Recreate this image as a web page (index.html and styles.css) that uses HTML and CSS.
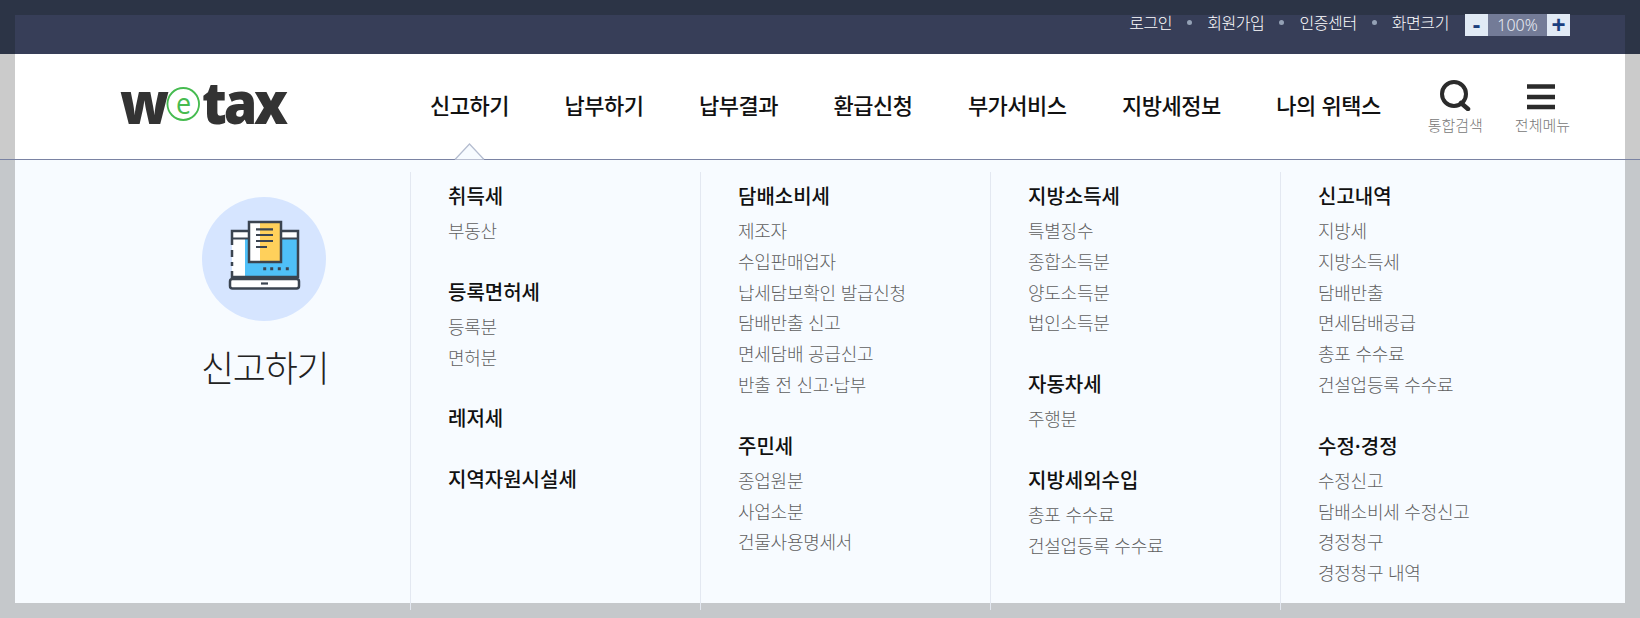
FILE: index.html
```html
<!DOCTYPE html>
<html lang="ko">

<head>
    <meta charset="UTF-8">
    <title>wetax</title>
    <link rel="stylesheet" href="styles.css">
</head>

<body>
    <!-- 상단 유틸 -->
    <div class="top">
        <a href="#" class="top-link">로그인</a>
        <i class="dot"></i>
        <a href="#" class="top-link">회원가입</a>
        <i class="dot"></i>
        <a href="#" class="top-link">인증센터</a>
        <i class="dot"></i>
        <span class="top-link">화면크기</span>
        <div class="zoom">
            <a href="#" class="zoom-btn">-</a>
            <span class="zoom-val">100%</span>
            <a href="#" class="zoom-btn">+</a>
        </div>
    </div>

    <!-- 헤더 -->
    <div class="head-wrap">
        <div class="head">
            <div class="logo-box">
                <a href="#" class="logo">w<span class="logo-e">e</span>tax</a>
            </div>
            <ul class="gnb">
                <li class="on">
                    <a href="#">신고하기</a>
                    <svg class="arrow" width="31" height="17" viewBox="0 0 31 17">
                        <path d="M1 16.5 L15.5 1 L30 16.5" fill="#f7fbff" stroke="#b4bccf" stroke-width="1.2"/>
                    </svg>
                </li>
                <li><a href="#">납부하기</a></li>
                <li><a href="#">납부결과</a></li>
                <li><a href="#">환급신청</a></li>
                <li><a href="#">부가서비스</a></li>
                <li><a href="#">지방세정보</a></li>
                <li><a href="#">나의 위택스</a></li>
            </ul>
            <a href="#" class="tool tool-search">
                <svg width="32" height="31" viewBox="0 0 32 31">
                    <circle cx="15" cy="14" r="12" fill="none" stroke="#2b2b2b" stroke-width="4"/>
                    <path d="M22 23 L29 29" stroke="#2b2b2b" stroke-width="4.5" stroke-linecap="round"/>
                </svg>
                <span>통합검색</span>
            </a>
            <a href="#" class="tool tool-menu">
                <svg width="28" height="31" viewBox="0 0 28 31">
                    <path d="M0 6.500 H28 M0 17 H28 M0 27 H28" stroke="#2b2b2b" stroke-width="4.500"/>
                </svg>
                <span>전체메뉴</span>
            </a>
        </div>
    </div>

    <!-- 전체 메뉴 패널 -->
    <div class="panel-wrap">
        <div class="panel">
            <div class="intro">
                <div class="intro-icon">
                    <svg width="124" height="124" viewBox="0 0 124 124">
                        <circle cx="62" cy="62" r="62" fill="#d6e5ff"/>
                        <rect x="30" y="34" width="66" height="46" fill="#fff"/>
                        <rect x="43" y="42" width="53" height="38" fill="#4fc0f8"/>
                        <path d="M30 48 V34 H96 V80 H30 V74 M30 53 V60 M30 65 V69" fill="none" stroke="#3b4450" stroke-width="2.500"/>
                        <path d="M30 41.500 H96" stroke="#3b4450" stroke-width="2"/>
                        <rect x="47" y="25" width="12" height="40" fill="#fff"/>
                        <rect x="58" y="25" width="21" height="40" fill="#ffd05b"/>
                        <rect x="47" y="25" width="32" height="40" fill="none" stroke="#3b4450" stroke-width="2.500"/>
                        <path d="M54 32.300 H71 M54 38 H71 M54 44 H71 M54 50 H65" stroke="#3b4450" stroke-width="2.200"/>
                        <path d="M62.700 71.700 v0.100 M69.700 71.700 v0.100 M77.300 71.700 v0.100 M85.300 71.700 v0.100" stroke="#3b4450" stroke-width="3" stroke-linecap="square"/>
                        <rect x="28" y="82" width="69" height="9.500" rx="2.500" fill="#fff" stroke="#3b4450" stroke-width="2.500"/>
                        <path d="M59 86.500 H66" stroke="#3b4450" stroke-width="2.200"/>
                    </svg>
                </div>
                <h2 class="intro-title">신고하기</h2>
            </div>

            <div class="col">
                <h3>취득세</h3>
                <ul>
                    <li>부동산</li>
                </ul>
                <h3>등록면허세</h3>
                <ul>
                    <li>등록분</li>
                    <li>면허분</li>
                </ul>
                <h3>레저세</h3>
                <ul></ul>
                <h3>지역자원시설세</h3>
            </div>

            <div class="col">
                <h3>담배소비세</h3>
                <ul>
                    <li>제조자</li>
                    <li>수입판매업자</li>
                    <li>납세담보확인 발급신청</li>
                    <li>담배반출 신고</li>
                    <li>면세담배 공급신고</li>
                    <li>반출 전 신고·납부</li>
                </ul>
                <h3>주민세</h3>
                <ul>
                    <li>종업원분</li>
                    <li>사업소분</li>
                    <li>건물사용명세서</li>
                </ul>
            </div>

            <div class="col">
                <h3>지방소득세</h3>
                <ul>
                    <li>특별징수</li>
                    <li>종합소득분</li>
                    <li>양도소득분</li>
                    <li>법인소득분</li>
                </ul>
                <h3>자동차세</h3>
                <ul>
                    <li>주행분</li>
                </ul>
                <h3>지방세외수입</h3>
                <ul>
                    <li>총포 수수료</li>
                    <li>건설업등록 수수료</li>
                </ul>
            </div>

            <div class="col">
                <h3>신고내역</h3>
                <ul>
                    <li>지방세</li>
                    <li>지방소득세</li>
                    <li>담배반출</li>
                    <li>면세담배공급</li>
                    <li>총포 수수료</li>
                    <li>건설업등록 수수료</li>
                </ul>
                <h3>수정·경정</h3>
                <ul>
                    <li>수정신고</li>
                    <li>담배소비세 수정신고</li>
                    <li>경정청구</li>
                    <li>경정청구 내역</li>
                </ul>
            </div>
        </div>
    </div>
</body>

</html>
```

FILE: styles.css
```css
* {
    margin: 0;
    padding: 0;
    box-sizing: border-box;
}

a {
    text-decoration: none;
    color: inherit;
}

li {
    list-style: none;
}

html,
body {
    height: 618px;
    overflow: hidden;
}

body {
    font-family: "Noto Sans CJK KR", "Noto Sans", sans-serif;
    background-color: #c5c8cb;
}

/* 상단 유틸 */
.top {
    display: flex;
    justify-content: flex-end;
    align-items: flex-start;
    height: 54px;
    padding: 13px 70px 0 0;
    background: linear-gradient(#373e58, #373e58) 15px 15px / 1610px 39px no-repeat, #2c3446;
}

.top-link {
    font-size: 16px;
    line-height: 18px;
    letter-spacing: -0.4px;
    color: #fff;
    font-weight: 300;
}

.dot {
    width: 5px;
    height: 5px;
    margin: 7px 15px 0;
    border-radius: 50%;
    background-color: #94a1b5;
}

.zoom {
    display: flex;
    height: 22px;
    margin-left: 16px;
    margin-top: 1px;
}

.zoom-btn {
    width: 23px;
    background-color: #e1eaf5;
    color: #1b3f7e;
    font-family: "Liberation Sans", sans-serif;
    font-size: 24px;
    font-weight: 700;
    line-height: 21px;
    text-align: center;
}

.zoom-val {
    width: 59px;
    background-color: #737b97;
    color: #e8ecf4;
    font-family: "Noto Sans", sans-serif;
    font-size: 16px;
    font-weight: 300;
    line-height: 22px;
    text-align: center;
}

/* 헤더 */
.head-wrap {
    height: 106px;
    padding: 0 15px;
    background-color: #cbcbcb;
    border-bottom: 1px solid #7a83a3;
}

.head {
    display: flex;
    align-items: center;
    height: 105px;
    padding-left: 105px;
    background-color: #fff;
}

.logo-box {
    flex: none;
    width: 310px;
    margin-bottom: 10px;
}

.logo {
    display: inline-flex;
    align-items: center;
    height: 60px;
    font-family: "Open Sans", sans-serif;
    font-size: 58px;
    font-weight: 800;
    letter-spacing: -3.5px;
    color: #333;
    transform: scaleX(.93);
    transform-origin: left center;
}

.logo-e {
    width: 36px;
    height: 34px;
    margin: 4px 2px 0 1px;
    border: 2px solid #46bb50;
    border-radius: 50%;
    font-size: 29px;
    font-weight: 400;
    letter-spacing: 0;
    line-height: 27px;
    text-align: center;
    color: #46bb50;
}

.gnb {
    display: flex;
    gap: 55.5px;
    height: 105px;
}

.gnb li {
    position: relative;
    font-size: 22px;
    font-weight: 500;
    line-height: 101px;
    letter-spacing: -0.5px;
    color: #111;
    white-space: nowrap;
}

.arrow {
    position: absolute;
    left: 24px;
    bottom: -1px;
    display: block;
}

.tool {
    display: flex;
    flex-direction: column;
    align-items: center;
    gap: 5px;
    margin-top: 1px;
    font-size: 15px;
    font-weight: 300;
    line-height: 18px;
    color: #777;
}

.tool-search {
    margin-left: 47px;
}

.tool-menu {
    margin-left: 32px;
}

.tool-menu svg {
    margin-right: 3px;
}

/* 전체 메뉴 패널 */
.panel-wrap {
    height: 458px;
    padding: 0 15px;
}

.panel {
    display: flex;
    height: 443px;
    padding-top: 12px;
    background-color: #f7fbff;
}

.intro {
    flex: none;
    width: 395px;
    padding: 25px 0 0 187px;
}

.intro-icon {
    width: 124px;
    height: 124px;
}

.intro-icon svg {
    display: block;
}

.intro-title {
    margin: 20px 0 0 -1px;
    font-size: 36px;
    font-weight: 300;
    line-height: 50px;
    letter-spacing: -1.3px;
    color: #222;
    white-space: nowrap;
}

.col {
    width: 290px;
    height: 438px;
    padding: 9px 0 0 37px;
    border-left: 1px solid #e3e8f1;
}

.col h3 {
    font-size: 20px;
    font-weight: 500;
    line-height: 30px;
    color: #111;
    margin-bottom: 4px;
}

.col ul {
    margin-bottom: 31px;
}

.col li {
    font-size: 18px;
    font-weight: 300;
    line-height: 30.8px;
    letter-spacing: -0.25px;
    color: #5f5f5f;
    white-space: nowrap;
}
```
